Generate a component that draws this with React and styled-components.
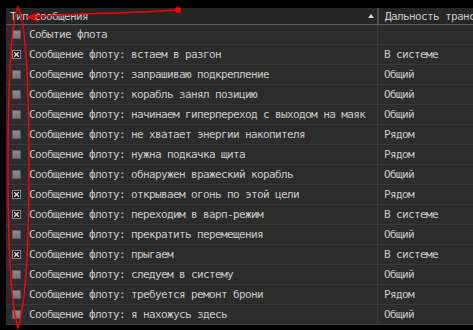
import React from 'react';
import styled, { createGlobalStyle } from 'styled-components';

const GlobalStyle = createGlobalStyle`
  html, body {
    margin: 0;
    padding: 0;
    background: #000;
    overflow: hidden;
  }
`;

const Screen = styled.div`
  position: relative;
  width: 473px;
  height: 330px;
  padding: 8px 0 0 6px;
  box-sizing: border-box;
  overflow: hidden;
  font-family: "DejaVu Sans Mono", monospace;
  font-size: 11px;
  letter-spacing: -0.62px;
  color: #cacaca;
`;

const Table = styled.div`
  width: 520px;
  background: #2c2c2c;
`;

const HeaderRow = styled.div`
  display: grid;
  grid-template-columns: 372px 1fr;
  height: 16px;
  background: #262626;
  border-bottom: 1px solid #5e5e5e;
`;

const HeaderCell = styled.div`
  display: flex;
  align-items: center;
  padding-left: ${p => p.$pad || 4}px;
  white-space: nowrap;
  border-left: ${p => (p.$divider ? '1px solid #4a4a4a' : 'none')};
  justify-content: space-between;
  padding-right: ${p => (p.$sort ? 3 : 0)}px;
  border-right: ${p => (p.$sort ? '1px solid #4a4a4a' : 'none')};
`;

const SortArrow = styled.span`
  width: 0;
  height: 0;
  border-left: 3px solid transparent;
  border-right: 3px solid transparent;
  border-bottom: 4px solid #d8d8d8;
`;

const Row = styled.div`
  display: grid;
  grid-template-columns: 372px 1fr;
  height: 20px;
  border-bottom: 1px solid #3a3a3a;
  box-sizing: border-box;
`;

const NameCell = styled.div`
  display: flex;
  align-items: center;
  padding-left: 6px;
  gap: 8px;
  white-space: nowrap;
  border-right: 1px solid #3a3a3a;
`;

const ValueCell = styled.div`
  display: flex;
  align-items: center;
  padding-left: 6px;
  white-space: nowrap;
`;

const Box = styled.span`
  width: 9px;
  height: 9px;
  box-sizing: border-box;
  flex: none;
  display: flex;
  align-items: center;
  justify-content: center;
  border: 1px solid ${p => (p.$checked ? '#8a8a8a' : '#5c5c5c')};
  background: ${p => (p.$checked ? '#151515' : 'linear-gradient(#8c8c8c, #767676)')};
`;

const Overlay = styled.svg`
  position: absolute;
  left: 0;
  top: 0;
  pointer-events: none;
`;

const rows = [
  ['Событие флота', '', false],
  ['Сообщение флоту: встаем в разгон', 'В системе', true],
  ['Сообщение флоту: запрашиваю подкрепление', 'Общий', false],
  ['Сообщение флоту: корабль занял позицию', 'Общий', false],
  ['Сообщение флоту: начинаем гиперпереход с выходом на маяк', 'Общий', false],
  ['Сообщение флоту: не хватает энергии накопителя', 'Рядом', false],
  ['Сообщение флоту: нужна подкачка щита', 'Рядом', false],
  ['Сообщение флоту: обнаружен вражеский корабль', 'Общий', false],
  ['Сообщение флоту: открываем огонь по этой цели', 'Рядом', true],
  ['Сообщение флоту: переходим в варп-режим', 'В системе', true],
  ['Сообщение флоту: прекратить перемещения', 'Общий', false],
  ['Сообщение флоту: прыгаем', 'В системе', true],
  ['Сообщение флоту: следуем в систему', 'Общий', false],
  ['Сообщение флоту: требуется ремонт брони', 'Рядом', false],
  ['Сообщение флоту: я нахожусь здесь', 'Общий', false],
];

const Check = ({ checked }) => (
  <Box $checked={checked}>
    {checked && (
      <svg width="5" height="5" viewBox="0 0 5 5">
        <path d="M0 0L5 5M5 0L0 5" stroke="#e0e0e0" strokeWidth="1.3" />
      </svg>
    )}
  </Box>
);

export default function App() {
  return (
    <>
      <GlobalStyle />
      <Screen>
        <Table>
          <HeaderRow>
            <HeaderCell $sort>
              <span>Тип сообщения</span>
              <SortArrow />
            </HeaderCell>
            <HeaderCell $divider $pad={6}>Дальность трансляции</HeaderCell>
          </HeaderRow>
          {rows.map(([name, range, checked], i) => (
            <Row key={i}>
              <NameCell>
                <Check checked={checked} />
                <span>{name}</span>
              </NameCell>
              <ValueCell>{range}</ValueCell>
            </Row>
          ))}
        </Table>
        {/* red hand-drawn markup over the screenshot */}
        <Overlay width="473" height="330" viewBox="0 0 473 330">
          <g fill="none" stroke="#ff0000" strokeWidth="1.4" strokeLinecap="round">
            <path d="M178 10 L142 12 L116 13 L80 14 L28 17" />
            <path d="M28 17 L39 13" />
            <path d="M28 17 L38 21" />
            <path d="M18 7 C11 22 8 90 8 170 C8 255 11 305 18 328 C25 305 29 250 29 170 C29 90 27 25 18 7 Z" />
          </g>
          <circle cx="178" cy="10" r="3" fill="#ff0000" />
        </Overlay>
      </Screen>
    </>
  );
}
